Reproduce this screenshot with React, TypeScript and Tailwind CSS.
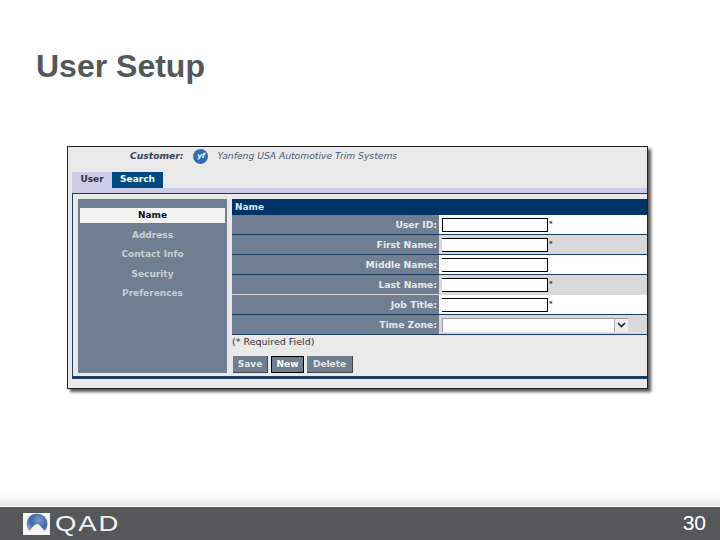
const sideItems = ["Address", "Contact Info", "Security", "Preferences"];

type field = {
  label: string;
  shaded: boolean;
  line: boolean;
  required: boolean;
  leftEdge: boolean;
};

const fields: field[] = [
  { label: "User ID:", shaded: false, line: true, required: true, leftEdge: true },
  { label: "First Name:", shaded: true, line: true, required: true, leftEdge: false },
  { label: "Middle Name:", shaded: false, line: true, required: false, leftEdge: false },
  { label: "Last Name:", shaded: true, line: false, required: true, leftEdge: false },
  { label: "Job Title:", shaded: false, line: true, required: true, leftEdge: false },
];

function QadMark() {
  return (
    <svg width="27" height="22" viewBox="0 0 27 22" className="block">
      <defs>
        <radialGradient id="ball" cx="0.6" cy="0.3" r="0.75">
          <stop offset="0" stopColor="#7f99c9" />
          <stop offset="0.55" stopColor="#3f66a6" />
          <stop offset="1" stopColor="#a9bdd0" />
        </radialGradient>
      </defs>
      <rect width="27" height="22" fill="#f4f5f6" />
      <circle cx="14" cy="11" r="10.5" fill="url(#ball)" />
      <path d="M3 22 C7 18 10 12 14 11 C18 12 21 18 25 22 Z" fill="#f4f5f6" />
    </svg>
  );
}

function App() {
  return (
    <div className="flex h-[540px] w-[720px] flex-col overflow-hidden bg-white font-['Liberation_Sans',sans-serif]">
      <h1 className="ml-[36px] mt-[46px] text-[32px] font-bold leading-[40px] text-[#54585a]">
        User Setup
      </h1>

      <div className="ml-[67px] mt-[60px] h-[243px] w-[581px] border border-[#222] bg-[#e9e9e9] font-['DejaVu_Sans',sans-serif] shadow-[3px_3px_3px_#555]">
        <div className="flex h-[25px] items-center pb-[7px] text-[9.2px]">
          <span className="ml-[62px] font-bold italic text-[#33415a]">Customer:</span>
          <span className="ml-[10px] flex h-[15px] w-[15px] items-center justify-center rounded-full bg-[#2f6fb5] text-[7px] font-bold italic text-white">
            yf
          </span>
          <span className="ml-[9px] italic text-[#4a5a78]">Yanfeng USA Automotive Trim Systems</span>
        </div>

        <div className="ml-[4px] flex h-[16px] text-[9px] font-bold">
          <div className="flex w-[40px] items-center justify-center bg-[#cccce8] text-[#333]">User</div>
          <div className="flex w-[51px] items-center justify-center bg-[#004a80] text-white">Search</div>
        </div>
        <div className="ml-[4px] h-[5px] bg-[#cccce8]" />

        <div className="ml-[4px] flex h-[186px] border-y-[1px] border-b-[3px] border-l border-[#1c3c60] pl-[5px] pt-[5px]">
          <div className="h-[174px] w-[149px] bg-[#6f7f91] px-[2px] pt-[9px] text-center text-[9px] font-bold text-[#c9ced4]">
            <div className="flex h-[15px] items-center justify-center bg-[#f2f2f2] pt-[1px] text-[#111]">Name</div>
            {sideItems.map((item) => (
              <div key={item} className="mt-[4.5px] flex h-[15px] items-center justify-center pt-[1px]">
                {item}
              </div>
            ))}
          </div>

          <div className="ml-[5px] flex-1">
            <div className="flex h-[16px] items-center bg-[#003366] pl-[3px] pt-[1px] text-[9px] font-bold text-[#dfe6ee]">
              Name
            </div>
            {fields.map((f) => (
              <div
                key={f.label}
                className={`flex h-[20px] border-b ${f.line ? "border-[#1c3c60]" : "border-transparent"} ${f.shaded ? "bg-[#d9d9d9]" : "bg-white"}`}
              >
                <div className="flex w-[207px] items-center justify-end bg-[#6f7f91] pr-[2px] text-[9.2px] font-bold text-[#e6e9ec]">
                  {f.label}
                </div>
                <div className="ml-[3px] flex items-center">
                  <div className={`h-[14px] w-[106px] border-y border-r border-black bg-white ${f.leftEdge ? "border-l" : ""}`} />
                  {f.required && <span className="ml-[1px] text-[7px] font-bold leading-none text-[#333]">*</span>}
                </div>
              </div>
            ))}
            <div className="flex h-[20px] border-b border-[#1c3c60] bg-[#d9d9d9]">
              <div className="flex w-[207px] items-center justify-end bg-[#6f7f91] pr-[2px] text-[9.2px] font-bold text-[#e6e9ec]">
                Time Zone:
              </div>
              <div className="ml-[3px] flex h-[14px] w-[186px] self-center border-l border-t border-[#999] bg-white">
                <div className="ml-auto flex w-[14px] items-center justify-center border-l border-[#aaa] bg-[#eeeeee]">
                  <svg width="9" height="6" viewBox="0 0 9 6">
                    <path d="M1 1 L4.5 4.5 L8 1" fill="none" stroke="#222" strokeWidth="1.6" />
                  </svg>
                </div>
              </div>
            </div>

            <div className="mt-[1px] text-[9.5px] leading-[11px] text-[#333]">(* Required Field)</div>
            <div className="ml-[1px] mt-[9px] flex gap-[3px] text-[9px] font-bold text-[#e2e6ea]">
              <button className="flex h-[17px] w-[35px] items-center justify-center border-r border-b border-[#444] bg-[#6f7f91] pt-[2px]">Save</button>
              <button className="flex h-[17px] w-[33px] items-center justify-center border border-black bg-[#6f7f91] text-white">New</button>
              <button className="flex h-[17px] w-[46px] items-center justify-center border-r border-b border-[#444] bg-[#6f7f91] pt-[2px]">Delete</button>
            </div>
          </div>
        </div>
      </div>

      <div className="mt-auto h-[12px] bg-gradient-to-b from-white to-[#e4e4e4]" />
      <div className="h-[1px] bg-white" />
      <div className="flex h-[33px] items-center bg-[#54585a] pl-[23px] pr-[14px]">
        <QadMark />
        <span className="ml-[5px] origin-left scale-x-[1.25] text-[22px] leading-none tracking-[1.5px] text-[#f2f2f2]">QAD</span>
        <span className="ml-auto pb-[3px] text-[21px] leading-none text-white">30</span>
      </div>
    </div>
  );
}

export default App;
